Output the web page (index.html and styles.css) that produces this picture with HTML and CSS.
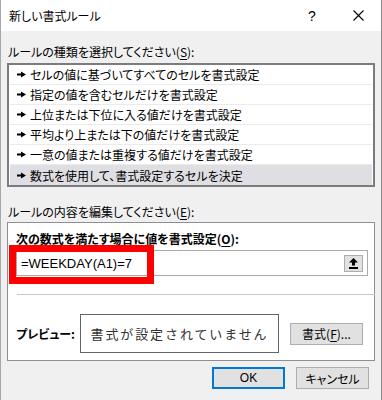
FILE: index.html
```html
<!DOCTYPE html>
<html lang="ja">
<head>
<meta charset="utf-8">
<link rel="stylesheet" href="styles.css">
</head>
<body>
<div class="window">
  <div class="titlebar">
    <span class="title">新しい書式ルール</span>
    <span class="tbtn help">?</span>
    <span class="tbtn close"><svg width="11" height="11" viewBox="0 0 11 11"><path d="M0.5 0.5L10.5 10.5M10.5 0.5L0.5 10.5" stroke="#000" stroke-width="1.1" fill="none"/></svg></span>
  </div>
  <div class="content">
    <div class="label l1">ルールの種類を選択してください(<u>S</u>):</div>
    <div class="list">
      <div class="row"><svg class="arr" width="9" height="7" viewBox="0 0 9 7"><path d="M0 2.5h4v2H0z M4 0.5L9 3.5L4 6.5z" fill="#000"/></svg><span>セルの値に基づいてすべてのセルを書式設定</span></div>
      <div class="row"><svg class="arr" width="9" height="7" viewBox="0 0 9 7"><path d="M0 2.5h4v2H0z M4 0.5L9 3.5L4 6.5z" fill="#000"/></svg><span>指定の値を含むセルだけを書式設定</span></div>
      <div class="row"><svg class="arr" width="9" height="7" viewBox="0 0 9 7"><path d="M0 2.5h4v2H0z M4 0.5L9 3.5L4 6.5z" fill="#000"/></svg><span>上位または下位に入る値だけを書式設定</span></div>
      <div class="row"><svg class="arr" width="9" height="7" viewBox="0 0 9 7"><path d="M0 2.5h4v2H0z M4 0.5L9 3.5L4 6.5z" fill="#000"/></svg><span>平均より上または下の値だけを書式設定</span></div>
      <div class="row"><svg class="arr" width="9" height="7" viewBox="0 0 9 7"><path d="M0 2.5h4v2H0z M4 0.5L9 3.5L4 6.5z" fill="#000"/></svg><span>一意の値または重複する値だけを書式設定</span></div>
      <div class="row selected"><svg class="arr" width="9" height="7" viewBox="0 0 9 7"><path d="M0 2.5h4v2H0z M4 0.5L9 3.5L4 6.5z" fill="#000"/></svg><span>数式を使用して、書式設定するセルを決定</span></div>
    </div>
    <div class="label l2">ルールの内容を編集してください(<u>E</u>):</div>
    <div class="panel">
      <div class="plabel">次の数式を満たす場合に値を書式設定(<u>O</u>):</div>
      <div class="input">
        <span class="formula">=WEEKDAY(A1)=7</span>
        <span class="collapse"><svg width="9" height="11" viewBox="0 0 9 11"><path d="M4.5 0L9 4.5H6V7.5H3V4.5H0z M0 9h9v2H0z" fill="#000"/></svg></span>
      </div>
      <div class="sep"></div>
      <div class="preview-row">
        <span class="plabel pv">プレビュー:</span>
        <div class="preview">書式が設定されていません</div>
        <span class="btn fmt">書式(<u>F</u>)...</span>
      </div>
    </div>
    <div class="footer">
      <span class="btn ok">OK</span>
      <span class="btn cancel">キャンセル</span>
    </div>
  </div>
  <div class="highlight"></div>
</div>
</body>
</html>
```

FILE: styles.css
```css
* { box-sizing: border-box; }
html, body { margin: 0; padding: 0; }
body {
  background: #f0f0f0;
  font-family: "Noto Sans CJK JP", sans-serif;
  font-size: 12px;
  color: #000;
  font-feature-settings: "palt";
}
u { text-decoration: underline; text-underline-offset: 2px; }
.window {
  position: relative;
  width: 382px;
  height: 400px;
  background: #f0f0f0;
  border-left: 1px solid #a8a8a8;
  border-right: 1px solid #8a8a8a;
  overflow: hidden;
}
.titlebar {
  height: 31px;
  background: #fff;
  display: flex;
  align-items: center;
}
.title {
  flex: 1;
  padding-left: 8px;
  font-size: 12px;
  line-height: 16px;
}
.tbtn {
  width: 46px;
  height: 31px;
  display: flex;
  align-items: center;
  justify-content: center;
}
.help {
  font-family: "Liberation Sans", sans-serif;
  font-size: 14px;
}
.content {
  padding: 0 6px 0 6px;
}
.label {
  line-height: 16px;
  height: 16px;
  padding-left: 1px;
  white-space: nowrap;
}
.l1 { margin-top: 13px; }
.list {
  margin-top: 3px;
  border: 2px solid #7b7b80;
  background: #fff;
  padding: 0 1px;
}
.row {
  height: 20px;
  display: flex;
  align-items: center;
  border-bottom: 1px solid #ebebeb;
  white-space: nowrap;
}
.row:last-child { border-bottom: none; }
.row.selected { background: #dedee3; }
.arr { margin-left: 7px; margin-right: 4px; flex: none; }
.l2 { margin-top: 17px; }
.panel {
  margin-top: 2px;
  background: #fff;
  border: 1px solid #8e8e94;
  padding: 8px 6px 6px 8px;
  height: 139px;
}
.plabel {
  font-weight: bold;
  line-height: 16px;
  height: 16px;
  white-space: nowrap;
}
.input {
  margin-top: 3px;
  height: 26px;
  border: 1px solid #a9a9a9;
  display: flex;
  align-items: center;
  padding-left: 4px;
  padding-right: 4px;
}
.formula {
  flex: 1;
  font-family: "Liberation Sans", sans-serif;
  font-size: 13px;
}
.collapse {
  width: 19px;
  height: 17px;
  background: #e1e1e1;
  border: 1px solid #adadad;
  display: flex;
  align-items: center;
  justify-content: center;
}
.sep {
  margin: 18px -7px 0 1px;
  height: 1px;
  background: #c8c8c8;
}
.preview-row {
  margin-top: 19px;
  display: flex;
  align-items: center;
}
.pv { width: 64px; }
.preview {
  width: 199px;
  height: 39px;
  border: 1px solid #646464;
  display: flex;
  align-items: center;
  justify-content: center;
  font-size: 13px;
  letter-spacing: 1.9px;
  color: #333;
  font-feature-settings: normal;
}
.btn {
  display: flex;
  align-items: center;
  justify-content: center;
  width: 73px;
  height: 22px;
  background: #e1e1e1;
  border: 1px solid #adadad;
  white-space: nowrap;
}
.fmt { margin-left: 11px; }
.footer {
  margin-top: 6px;
  display: flex;
  justify-content: flex-end;
  gap: 11px;
  padding-right: 6px;
}
.ok {
  border: 2px solid #0078d7;
  font-family: "Liberation Sans", sans-serif;
}
.highlight {
  position: absolute;
  left: 8px;
  top: 245px;
  width: 145px;
  height: 39px;
  border: 7px solid #ff0000;
}
```
